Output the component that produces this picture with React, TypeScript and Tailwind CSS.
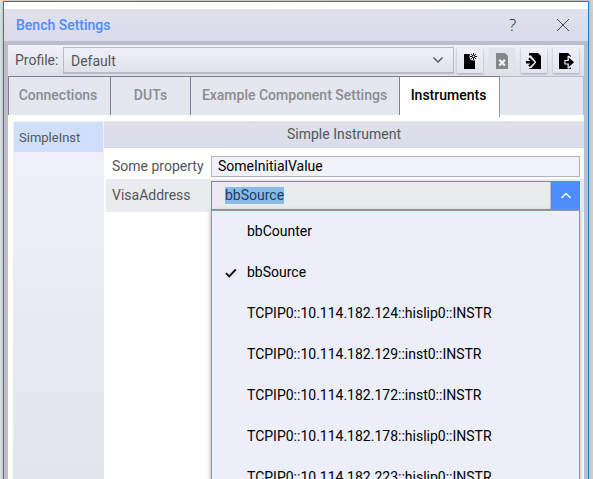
import type { ReactNode } from 'react';

const options = [
  'bbCounter',
  'bbSource',
  'TCPIP0::10.114.182.124::hislip0::INSTR',
  'TCPIP0::10.114.182.129::inst0::INSTR',
  'TCPIP0::10.114.182.172::inst0::INSTR',
  'TCPIP0::10.114.182.178::hislip0::INSTR',
  'TCPIP0::10.114.182.223::hislip0::INSTR',
];

function ToolButton({ children, disabled = false }: { children: ReactNode; disabled?: boolean }) {
  return (
    <button
      className={
        disabled
          ? 'h-[25px] w-[26px] shrink-0 bg-[#e2e3ea] shadow-[0_0_1px_#d0d1da]'
          : 'h-[25px] w-[26px] shrink-0 bg-gradient-to-b from-[#eeeffb] to-[#e3e5ed] shadow-[0_1px_2px_#a5a7b4]'
      }
    >
      {children}
    </button>
  );
}

function Toolbar() {
  return (
    <div className="flex h-[31px] items-start bg-gradient-to-b from-[#f0f0f9] to-[#dedfe8] pt-[2px] pl-[7px]">
      <span className="w-12 pt-[3px] text-[14px] leading-5 text-[#55565a]">Profile:</span>
      <div className="flex h-[27px] w-[391px] items-center justify-between border border-b-2 border-[#b8bac5] bg-gradient-to-b from-[#eeeffc] to-[#dfe2e9] pr-[9px] pl-[7px] text-[#55565a]">
        <span className="pt-[2px] text-[14px]">Default</span>
        <svg width="12" height="8" viewBox="0 0 12 8" fill="none" stroke="#5b5d66" strokeWidth="1.5">
          <path d="M1.5 1.5 6 6l4.5-4.5" />
        </svg>
      </div>
      <div className="flex gap-[6px] pt-px pl-[3px]">
        <ToolButton>
          <svg width="26" height="25" viewBox="0 0 26 25">
            <path d="M7 6h7v5h4v10H7z" fill="#000" />
            <circle cx="16.5" cy="8.5" r="4" fill="#e9eaf5" />
            <path
              d="M16.5 5v7M13 8.5h7M14.1 6.1l4.8 4.8M18.9 6.1l-4.8 4.8"
              stroke="#000"
              strokeWidth="1"
            />
            <circle cx="16.5" cy="8.5" r="1" fill="#fff" />
          </svg>
        </ToolButton>
        <ToolButton disabled>
          <svg width="26" height="25" viewBox="0 0 26 25">
            <path d="M7 5h9l3 3v13H7z" fill="#85868a" />
            <path d="m10.3 11.9 5.6 5.6m0-5.6-5.6 5.6" stroke="#eeeef4" strokeWidth="2.2" />
          </svg>
        </ToolButton>
        <ToolButton>
          <svg width="26" height="25" viewBox="0 0 26 25">
            <path d="M8 5h9l3 3v13H8z" fill="#000" />
            <path d="M4 12h4.5L6.5 9.5 9.5 6.5l1 .2 5 5v5.6l-5 4h-2L6 19.2 8.5 17H4z" fill="none" />
            <path d="M7 7.5h3l5.3 6.7-5.3 6.3H7z" fill="#eeeffa" />
            <path d="M5 13.1h4.3L7.2 10.9l1.5-1.5 4.9 4.8-4.9 4.9-1.5-1.5 2.1-2.2H5z" fill="#000" />
            <path d="M8 5h3v1.5H8zM8 20.5h3v.5H8z" fill="#000" />
          </svg>
        </ToolButton>
        <ToolButton>
          <svg width="26" height="25" viewBox="0 0 26 25">
            <path d="M6 5h9l3 3v13H6z" fill="#000" />
            <path d="M11.3 12h3.2V7.7h2L23 14l-6.5 6.5h-2V16.5h-3.2z" fill="#eeeffa" />
            <path d="M12.5 13.1h3.3V9.4l5.3 4.8-5.3 4.9v-3.7h-3.3z" fill="#000" />
          </svg>
        </ToolButton>
      </div>
    </div>
  );
}

function Tabs() {
  return (
    <div className="relative z-10 flex h-[39px] border-t border-l border-[#7c7d94] bg-[#e4e7ef] text-[14px] font-medium text-[#8b8c91]">
      <div className="flex w-[102px] shrink-0 items-center justify-center border-r border-[#7c7d94] pr-[3px] pb-px">
        Connections
      </div>
      <div className="flex w-20 shrink-0 items-center justify-center border-r border-[#7c7d94] pb-px">DUTs</div>
      <div className="flex w-[209px] shrink-0 items-center justify-center border-r border-[#7c7d94] pr-px pb-px">
        Example Component Settings
      </div>
      <div className="flex h-10 w-[100px] shrink-0 items-center justify-center border-r border-[#9798a9] bg-white pr-[2px] pb-[3px] text-black">
        Instruments
      </div>
      <div className="-mt-px flex-1 border-t border-r border-[#babcc9]" />
    </div>
  );
}

function OptionList() {
  return (
    <ul className="absolute top-[29px] left-0 h-[300px] w-[369px] border border-[#9698a4] bg-[#eceefa] text-black shadow-[0_1px_4px_#9a9ba5]">
      {options.map((option) => (
        <li key={option} className="flex h-[41px] items-center pl-[13px]">
          <span className="w-[22px]">
            {option === 'bbSource' && (
              <svg width="12" height="10" viewBox="0 0 12 10" fill="none" stroke="#111" strokeWidth="1.9">
                <path d="m1 5.2 3.2 3.2L10.8 1.5" />
              </svg>
            )}
          </span>
          {option}
        </li>
      ))}
    </ul>
  );
}

export default function App() {
  return (
    <div className="h-[479px] w-[593px] overflow-hidden bg-gradient-to-r from-[#e6e3df] to-[#d1d1d3] pt-px pl-[3px] font-[Roboto,sans-serif] text-[14px]">
      <div className="flex h-[490px] w-[586px] flex-col border border-[#187fcd] bg-white pt-[7px] shadow-[0_0_4px_#aaa]">
        <header className="flex h-8 shrink-0 items-center bg-gradient-to-b from-[#dfe1eb] to-[#d9dbec] pl-3">
          <h1 className="flex-1 text-[14px] font-medium text-[#4d8dff]">Bench Settings</h1>
          <span className="w-[47px] font-['Open_Sans',sans-serif] text-[17px] font-light text-[#222]">?</span>
          <svg className="mr-[18px]" width="14" height="14" viewBox="0 0 14 14" stroke="#444750" strokeWidth="1">
            <path d="m1 1 12 12M13 1 1 13" />
          </svg>
        </header>
        <div className="flex min-h-0 flex-1 flex-col border-x-4 border-t-4 border-[#bbbdcb]">
          <Toolbar />
          <Tabs />
          <main className="flex min-h-0 flex-1 bg-white pt-[6px] pl-[5px] text-[#55565a]">
            <aside className="h-[400px] w-[91px] shrink-0 bg-gradient-to-b from-[#f1f1fb] to-[#e0e3ec] p-px">
              <div className="h-[30px] bg-[#cfdffa] pt-[6px] pl-[5px] text-[13px] leading-5">SimpleInst</div>
            </aside>
            <section className="flex-1">
              <h2 className="h-[27px] bg-gradient-to-b from-[#dee1ea] to-[#dadcec] pt-[3px] text-center leading-5">
                Simple Instrument
              </h2>
              <div className="flex h-[31px] items-start pt-2 pl-2">
                <label className="w-[99px] leading-5">Some property</label>
                <div className="h-[21px] w-[369px] border border-[#b0b2bf] bg-[#f2f3fa] pl-[6px] leading-[19px] text-black">
                  SomeInitialValue
                </div>
              </div>
              <div className="ml-[2px] flex h-[33px] items-start bg-[#e9ebef] pt-[2px] pl-[6px]">
                <label className="w-[99px] pt-1 leading-5">VisaAddress</label>
                <div className="relative h-[29px] w-[369px]">
                  <div className="flex h-[29px] border border-[#4d8dff] bg-[#e9ebef]">
                    <div className="flex flex-1 items-center border-r border-[#babcc8] pl-[13px]">
                      <span className="bg-[#8abbe8] leading-[17px] text-[#173e67]">bbSource</span>
                    </div>
                    <div className="flex w-7 items-center justify-center bg-[#4d8dff]">
                      <svg className="ml-px" width="12" height="8" viewBox="0 0 12 8" fill="none" stroke="#fff" strokeWidth="1.4">
                        <path d="M1.5 6 6 1.5 10.5 6" />
                      </svg>
                    </div>
                  </div>
                  <OptionList />
                </div>
              </div>
            </section>
          </main>
        </div>
      </div>
    </div>
  );
}
